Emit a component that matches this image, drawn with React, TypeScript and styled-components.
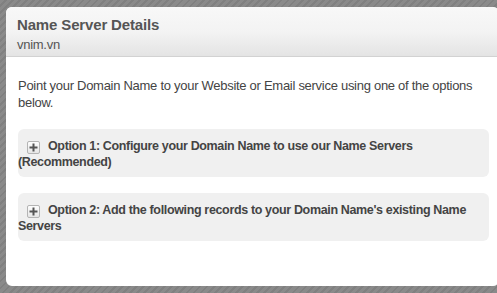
import React from 'react';
import styled, { createGlobalStyle } from 'styled-components';

const GlobalStyle = createGlobalStyle`
  html, body {
    margin: 0;
    padding: 0;
  }
  body {
    width: 497px;
    height: 293px;
    overflow: hidden;
    font-family: 'Liberation Sans', Arial, sans-serif;
    background-color: #858585;
    background-image: repeating-linear-gradient(
      135deg,
      #8a8a8a 0px,
      #8a8a8a 3px,
      #808080 3px,
      #808080 5px
    );
  }
`;

const Backdrop = styled.div`
  padding: 7px 0 0 6px;
  height: 293px;
  box-sizing: border-box;
`;

const Dialog = styled.div`
  width: 493px;
  height: 279px;
  background: #fff;
  border-radius: 6px;
  overflow: hidden;
  display: flex;
  flex-direction: column;
`;

const Header = styled.div`
  height: 50px;
  box-sizing: border-box;
  padding: 9px 11px 0;
  background: linear-gradient(to bottom, #f8f8f8 0%, #f3f3f3 50%, #e4e4e4 100%);
  border-bottom: 1px solid #d2d2d2;
`;

const Title = styled.div`
  font-size: 15px;
  font-weight: bold;
  line-height: 18px;
  letter-spacing: -0.15px;
  color: #555;
`;

const Subtitle = styled.div`
  font-size: 13px;
  line-height: 16px;
  margin-top: 3px;
  letter-spacing: -0.28px;
  color: #555;
`;

const Body = styled.div`
  padding: 20px 10px 0 12px;
  color: #444;
  font-size: 13px;
`;

const Intro = styled.p`
  margin: 0 0 18px;
  line-height: 17px;
  letter-spacing: -0.28px;
`;

const Option = styled.div<{ $gap?: number }>`
  background: #f0f0f0;
  border-radius: 6px;
  padding: 9px 6px 7px 0;
  margin-bottom: ${p => p.$gap ?? 0}px;
  font-size: 12.5px;
  font-weight: bold;
  letter-spacing: -0.35px;
  line-height: 16px;
  color: #444;
`;

const Toggle = styled.span`
  display: inline-flex;
  align-items: center;
  justify-content: center;
  width: 11px;
  height: 11px;
  margin: 0 8px 0 9px;
  vertical-align: -2px;
  border: 1px solid #b4b4b4;
  border-radius: 2px;
  background: linear-gradient(to bottom, #fdfdfd, #e6e6e6);
`;

const PlusIcon = () => (
  <svg width="9" height="9" viewBox="0 0 9 9">
    <rect x="3.5" y="0.5" width="2" height="8" fill="#555" />
    <rect x="0.5" y="3.5" width="8" height="2" fill="#555" />
  </svg>
);

export default function App() {
  return (
    <>
      <GlobalStyle />
      <Backdrop>
        <Dialog>
          <Header>
            <Title>Name Server Details</Title>
            <Subtitle>vnim.vn</Subtitle>
          </Header>
          <Body>
            <Intro>
              Point your Domain Name to your Website or Email service using one of the options below.
            </Intro>
            <Option $gap={16}>
              <Toggle><PlusIcon /></Toggle>
              Option 1: Configure your Domain Name to use our Name Servers (Recommended)
            </Option>
            <Option>
              <Toggle><PlusIcon /></Toggle>
              Option 2: Add the following records to your Domain Name's existing Name Servers
            </Option>
          </Body>
        </Dialog>
      </Backdrop>
    </>
  );
}
